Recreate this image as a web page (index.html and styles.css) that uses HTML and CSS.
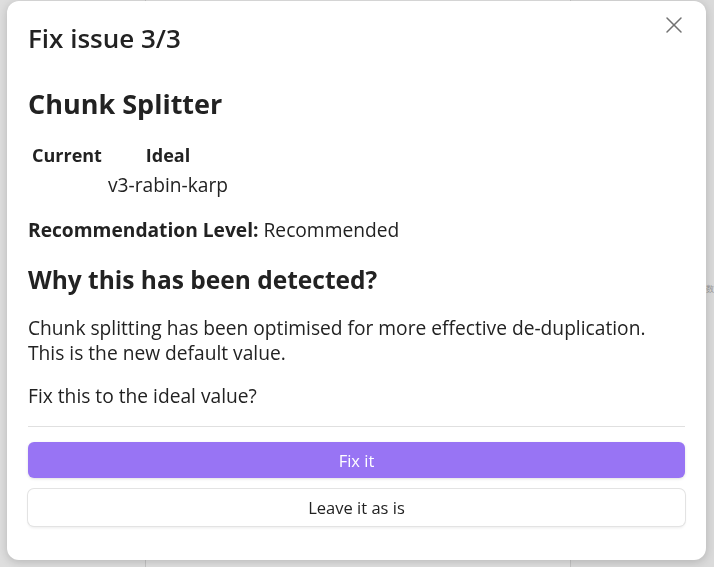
FILE: index.html
```html
<!DOCTYPE html>
<html lang="en">
<head>
    <meta charset="UTF-8">
    <meta name="viewport" content="width=device-width, initial-scale=1.0">
    <title>Fix issue 3/3</title>
    <link rel="stylesheet" href="styles.css">
</head>
<body>
    <div class="workspace">
        <div class="pane pane-files"></div>
        <div class="pane pane-editor"></div>
        <div class="pane pane-side"><span class="side-label">数</span></div>
    </div>

    <div class="modal-container">
        <div class="modal">
            <button class="modal-close" aria-label="Close">
                <svg width="24" height="24" viewBox="0 0 24 24" fill="none" stroke="currentColor" stroke-width="1.5" stroke-linecap="round">
                    <path d="M19 5 5 19"/>
                    <path d="m5 5 14 14"/>
                </svg>
            </button>
            <div class="modal-title">Fix issue 3/3</div>
            <div class="modal-content">
                <h2 class="setting-name">Chunk Splitter</h2>

                <table class="value-table">
                    <tr>
                        <th>Current</th>
                        <th>Ideal</th>
                    </tr>
                    <tr>
                        <td></td>
                        <td>v3-rabin-karp</td>
                    </tr>
                </table>

                <p><b>Recommendation Level:</b> Recommended</p>

                <h2 class="reason-title">Why this has been detected?</h2>
                <p class="reason">Chunk splitting has been optimised for more effective de-duplication.<br>This is the new default value.</p>
                <p class="question">Fix this to the ideal value?</p>

                <hr>

                <div class="actions">
                    <button class="btn mod-cta">Fix it</button>
                    <button class="btn">Leave it as is</button>
                </div>
            </div>
        </div>
    </div>
</body>
</html>
```

FILE: styles.css
```css
* {
    margin: 0;
    padding: 0;
    box-sizing: border-box;
}

html, body {
    height: 100%;
}

body {
    font-family: 'Segoe UI', 'Open Sans', 'Noto Sans', sans-serif;
    color: #222;
    background: #d9d9d9;
    overflow: hidden;
}

/* app panes behind the dimmed backdrop */
.workspace {
    display: grid;
    grid-template-columns: 146px 1fr 144px;
    height: 100%;
}

.pane {
    background: #dedede;
}

.pane-files {
    border-right: 1px solid #c4c4c4;
}

.pane-editor {
    background: #e0e0e0;
}

.pane-side {
    border-left: 1px solid #c4c4c4;
    background: #dadada;
    padding: 282px 0 0 135px;
}

.side-label {
    display: block;
    font-family: 'Noto Sans CJK SC', sans-serif;
    font-size: 8px;
    line-height: 13px;
    color: #9a9a9a;
}

.modal-container {
    position: fixed;
    inset: 0;
    padding: 1px 8px 7px 7px;
    display: flex;
}

.modal {
    position: relative;
    flex: 1;
    background: #fff;
    border-radius: 12px;
    box-shadow: 0 2px 10px rgba(0,0,0,0.18);
    padding: 20px 21px 34px 21px;
}

.modal-close {
    position: absolute;
    top: 12px;
    right: 20px;
    width: 24px;
    height: 24px;
    display: flex;
    align-items: center;
    justify-content: center;
    background: none;
    border: none;
    color: #727272;
    cursor: pointer;
}

.modal-title {
    font-size: 26px;
    font-weight: 600;
    line-height: 34px;
    margin-bottom: 31px;
}

.modal-content {
    font-size: 19.2px;
    line-height: 25px;
}

h2 {
    font-weight: 700;
}

.setting-name {
    font-size: 27px;
    line-height: 35px;
    margin-bottom: 19px;
}

.reason-title {
    font-size: 24.5px;
    line-height: 32px;
    margin-top: 22px;
    margin-bottom: 19px;
}

.value-table {
    border-spacing: 2px;
    margin-bottom: 15px;
    line-height: 1.4;
}

.value-table th {
    font-size: 18px;
    font-weight: 700;
    padding: 1px 2px;
}

.value-table td {
    padding: 1px 2px;
}

p {
    margin-bottom: 17px;
}

.reason {
    margin-bottom: 18px;
}

.question {
    margin-bottom: 18px;
}

hr {
    border: none;
    border-top: 1px solid #e0e0e0;
    margin: 0 0 15px;
}

.actions {
    display: flex;
    flex-direction: column;
    gap: 11px;
}

.btn {
    height: 37px;
    font-family: inherit;
    font-size: 16.5px;
    color: #222;
    background: #fff;
    border: none;
    border-radius: 6px;
    box-shadow: 0 0 0 1px #e3e3e3, 0 2px 3px rgba(0,0,0,0.08);
    cursor: pointer;
}

.btn.mod-cta {
    height: 36px;
    background: #9874f4;
    color: #fff;
    box-shadow: 0 1px 3px rgba(0,0,0,0.12);
}
```
